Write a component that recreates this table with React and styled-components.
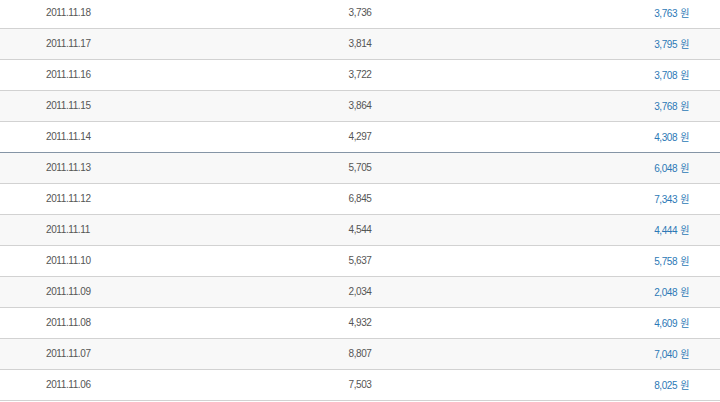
import React from 'react'
import styled, { createGlobalStyle } from 'styled-components'

const GlobalStyle = createGlobalStyle`
  html, body {
    margin: 0;
    padding: 0;
    background: #fff;
    overflow: hidden;
  }
`

const Table = styled.table`
  width: 720px;
  margin-top: -3px;
  border-collapse: collapse;
  table-layout: fixed;
  font-family: "Liberation Sans", "Noto Sans CJK KR", sans-serif;
  font-size: 10px;
  letter-spacing: -0.4px;
  color: #555;
`

const Row = styled.tr`
  height: 31px;
  background: ${(props) => (props.striped ? '#f8f8f8' : '#fff')};
  border-bottom: 1px solid ${(props) => (props.strong ? '#8595a6' : '#d2d2d2')};
`

const DateCell = styled.td`
  width: 194px;
  padding: 0 0 0 46px;
  text-align: left;
`

const CountCell = styled.td`
  text-align: center;
  padding: 0;
`

const PriceCell = styled.td`
  width: 209px;
  text-align: right;
  padding: 0 31px 0 0;
  color: #2b79b6;
`

const Won = styled.span`
  font-family: "Noto Sans CJK KR", sans-serif;
  font-size: 10px;
  margin-left: 3px;
`

const rows = [
  ['2011.11.18', '3,736', '3,763'],
  ['2011.11.17', '3,814', '3,795'],
  ['2011.11.16', '3,722', '3,708'],
  ['2011.11.15', '3,864', '3,768'],
  ['2011.11.14', '4,297', '4,308'],
  ['2011.11.13', '5,705', '6,048'],
  ['2011.11.12', '6,845', '7,343'],
  ['2011.11.11', '4,544', '4,444'],
  ['2011.11.10', '5,637', '5,758'],
  ['2011.11.09', '2,034', '2,048'],
  ['2011.11.08', '4,932', '4,609'],
  ['2011.11.07', '8,807', '7,040'],
  ['2011.11.06', '7,503', '8,025'],
]

const App = () => {
  return (
    <>
      <GlobalStyle />
      <Table>
        <tbody>
          {rows.map(([date, count, price], i) => (
            <Row key={date} striped={i % 2 === 1} strong={i === 4}>
              <DateCell>{date}</DateCell>
              <CountCell>{count}</CountCell>
              <PriceCell>
                {price}
                <Won>원</Won>
              </PriceCell>
            </Row>
          ))}
        </tbody>
      </Table>
    </>
  )
}

export default App
